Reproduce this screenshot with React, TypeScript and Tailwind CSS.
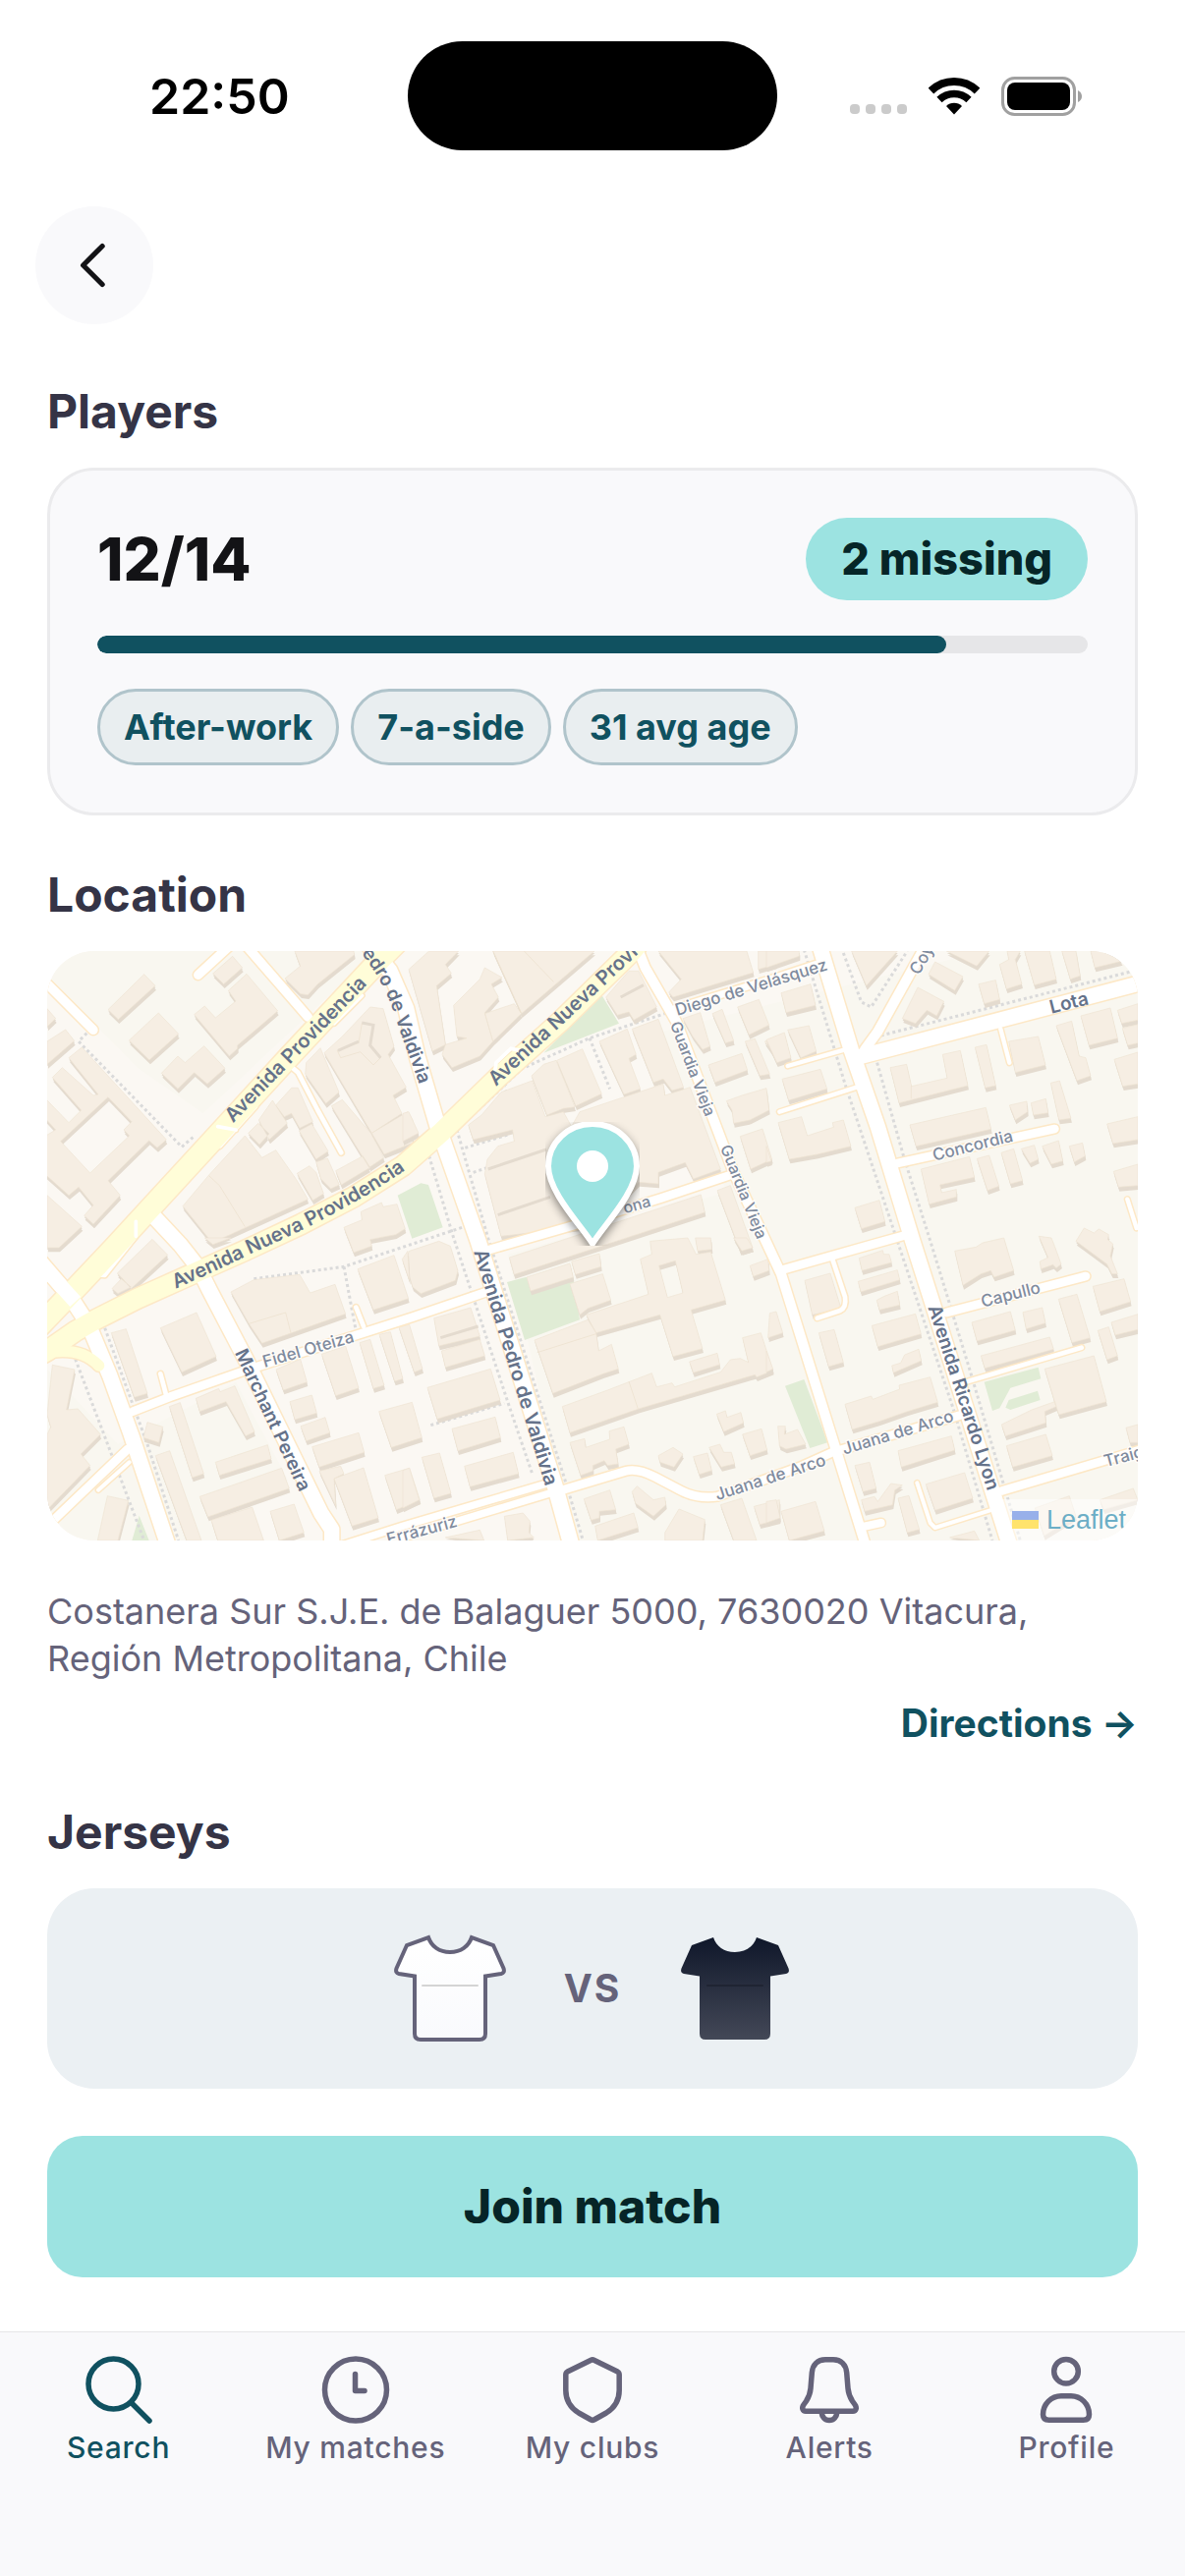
import { useState } from 'react';
import type { ReactNode } from 'react';

const players = { joined: 12, total: 14 };
const tags = ['After-work', '7-a-side', '31 avg age'];

const navItems = [
  { id: 'search', label: 'Search', icon: <SearchIcon /> },
  { id: 'matches', label: 'My matches', icon: <ClockIcon /> },
  { id: 'clubs', label: 'My clubs', icon: <ShieldIcon /> },
  { id: 'alerts', label: 'Alerts', icon: <BellIcon /> },
  { id: 'profile', label: 'Profile', icon: <ProfileIcon /> },
];

// Building footprints, one tile per entry, in tile units.
const tiles = [
  {
    x: 0,
    y: 0,
    d: 'M210,203 320,95 354,130 241,233z M274,297 364,213 425,277 336,357z M473,218 505,192 538,228 600,177 577,145 633,94 728,207 605,312 605,322 580,345z M530,93 590,40 620,75 563,125z M373,397 423,345 445,365 503,314 567,382 513,430 473,395 423,445z M24,200 50,230 24,255z M24,300 80,264 107,298 24,370z M90,350 130,318 388,600 360,625 335,603 210,725 247,770 165,858 137,832 165,800 120,745 90,770 0,690 0,600 50,570 0,515 0,455 90,548 128,510 40,410 70,380 165,465 180,462z M65,605 155,702 275,588 258,570 282,545 210,470z M24,770 130,865 60,930 24,930z M750,108 797,70 780,24 960,24 962,35 850,125 820,158 798,155z M925,285 1010,195 1050,200 1083,315 1065,340 1120,440 1080,465 1107,520 1015,580 870,335z M815,365 858,320 915,455 875,490 812,400z M892,497 925,478 1012,580 1052,655 1007,685z M1015,580 1125,515 1140,540 1140,610 1053,645z M722,495 770,442 790,442 835,545 795,565 770,520 748,530z M670,540 712,480 757,550 702,600z M638,580 668,550 702,582 672,615z M793,573 832,552 882,635 845,660z M518,708 628,588 680,655 722,632 785,722 820,782 528,915 438,803z M787,703 825,680 845,700 868,765 835,785z M845,668 880,657 916,738 890,750 860,720z M905,695 988,650 1010,685 922,738z M930,868 985,845 982,820 1045,792 1050,805 1092,797 1117,872 1088,890 1010,905 1015,925 960,945z',
  },
  {
    x: 1110,
    y: 0,
    d: 'M18,80 80,24 170,24 130,65 148,92 103,130 130,310 90,330z M155,190 235,110 250,75 303,105 270,125 292,165 250,212 275,300 235,345 150,380 120,340 130,310 195,290 165,285z M275,24 585,24 362,215z M250,215 340,185 362,215 275,300z M620,165 650,130 690,85 720,85 740,125 775,195 705,235 690,210 655,220z M780,24 1050,24 1070,90 825,165 812,150 850,110z M1085,24 1140,24 1140,65 1085,80z M700,262 780,232 857,440 822,450 795,415 765,425z M600,300 685,262 712,340 690,352 725,445 675,462z M470,358 548,323 607,460 528,497z M393,405 430,370 468,358 525,500 490,505 440,525z M240,525 300,455 395,420 435,530 490,515 515,560 540,515 675,470 795,430 800,465 877,440 970,690 887,720 862,670 780,700 780,735 720,730 590,860 300,895 250,705 258,660 290,620 340,605 335,570 215,600 200,555z M855,230 908,212 938,315 915,325 885,285z M945,215 975,202 1010,298 985,305z M1022,195 1087,172 1118,250 1057,280z M933,372 1035,337 1052,388 953,425z M1045,300 1075,292 1120,400 1090,405z M1105,300 1140,285 1140,350z M988,482 1035,465 1110,443 1118,510 1060,540 1010,550 1005,510z M1030,590 1098,567 1127,660 1062,690z M325,960 910,768 922,822 340,1012z M960,755 1000,740 1068,930 1030,940z M0,520 18,515 48,580 0,605z M5,970 20,940 110,910 145,925 168,1000 160,1030 55,1070 30,1050z',
  },
  {
    x: 2220,
    y: 0,
    d: 'M0,24 100,24 100,40 0,75z M260,24 400,24 305,130z M550,24 680,24 642,70z M495,95 515,57 600,102 575,145z M462,135 542,178 520,222 490,205 455,245 415,230z M648,125 700,113 712,172 665,185z M712,65 740,50 735,24 775,24 760,50 780,125 733,140z M788,24 865,24 885,110 818,128z M902,24 945,24 958,100 928,110z M990,24 1060,24 1085,55 1003,75z M45,152 135,125 150,190 60,212z M0,295 55,273 75,350 32,365z M65,265 130,252 152,330 105,350z M48,415 165,385 185,445 68,480z M36,548 107,530 125,588 205,562 202,548 235,540 258,620 155,645 70,660z M0,620 15,665 0,670z M378,380 428,370 443,437 552,412 538,340 592,328 615,435 405,488z M637,318 672,310 700,435 668,442z M740,300 830,285 852,372 760,395z M885,252 932,238 955,345 975,350 990,405 948,420z M960,222 1050,198 1072,290 985,312z M1072,205 1134,185 1134,235 1085,245z M1087,260 1134,248 1134,305 1103,312z M1062,355 1134,333 1134,430 1088,437z M868,427 895,420 930,535 893,540z M742,495 795,483 797,515 760,540z M808,488 853,475 860,518 815,525z M438,555 670,502 686,568 457,620z M472,690 620,652 635,715 530,738 535,762 580,752 580,775 497,797z M643,658 680,648 710,742 675,755z M717,640 755,628 782,725 745,735z M778,628 818,617 830,660 805,672z M842,620 892,603 905,665 870,675z M925,620 965,610 973,650 940,668z M1040,552 1134,530 1134,600 1058,612z M1060,697 1134,675 1134,740 1075,745z M270,808 345,785 362,850 290,872z M945,910 970,870 1000,885 1015,873 1045,890 1042,905 1058,918 1050,955 1072,1010 1055,1010 1040,980z',
  },
  {
    x: 0,
    y: 900,
    d: 'M505,0 585,0 530,20z M238,108 345,4 392,52 280,155 255,125z M222,155 250,125 280,150 240,170z M370,275 480,228 540,362 435,410z M220,290 265,278 330,475 290,487z M585,165 655,128 795,112 827,168 903,142 935,232 680,322 640,262z M972,95 1083,53 1127,185 1020,220z M1108,65 1125,40 1130,130z M330,563 377,577 365,625 318,610z M397,515 430,503 502,720 467,732z M478,490 548,460 552,470 597,452 657,592 630,605 570,500 490,530z M538,685 697,632 708,675 550,725z M490,790 740,703 763,765 515,852z M355,665 398,650 495,924 450,924z M525,862 650,822 685,924 545,924z M705,835 778,813 808,900 733,924z M723,402 797,370 817,440 745,465z M765,500 832,480 847,535 780,555z M798,575 873,548 887,595 815,620z M833,638 975,595 992,655 855,700z M855,712 920,697 930,720 900,735 905,818z M900,735 990,702 1035,855 955,880z M862,355 935,330 975,458 905,482z M978,320 1010,310 1053,450 1020,460z M1038,295 1072,287 1110,430 1085,438z M1098,273 1130,265 1170,400 1145,410z M1037,530 1138,502 1168,610 1075,640z M1055,725 1130,703 1162,800 1090,830z M40,388 108,402 83,525 118,522 187,600 127,660 155,695 24,830 24,600 35,578 24,540z M208,788 272,802 240,924 178,924z',
  },
  {
    x: 1110,
    y: 900,
    d: 'M95,245 207,213 235,300 110,330z M118,345 235,310 250,360 130,395z M75,457 268,400 297,495 105,553z M150,583 282,547 298,610 168,650z M188,697 337,655 353,720 205,760z M58,670 112,657 147,780 95,795z M310,850 367,840 388,865 385,900 400,915 320,924z M130,915 235,892 248,924z M378,120 510,78 520,120 390,162z M515,72 600,48 605,88 527,112z M510,140 610,110 635,190 565,215 540,235z M725,65 760,50 755,10 870,0 895,50 940,43 985,190 880,220 915,338 825,362 785,235 590,290 560,235 750,172z M782,85 808,182 855,168 832,70z M402,312 565,250 590,290 598,345 637,325 658,400 612,415 458,475z M487,515 625,465 760,413 775,455 822,443 830,455 970,410 1000,372 1030,368 1055,380 1037,305 1093,290 1130,405 1080,425 1075,418 720,522 510,595z M875,378 960,352 967,387 887,412z M1060,85 1115,65 1118,100 1070,118z M893,0 940,0 943,35 900,40z M1010,0 1050,0 1068,30 1035,40z M958,538 985,528 990,548 1032,533 1040,565 980,592z M1037,600 1095,583 1112,648 1060,665z M935,640 968,630 980,655 1003,655 1013,690 972,700z M887,668 930,657 943,710 905,722z M780,665 825,640 855,660 828,700 785,685z M510,625 555,613 558,640 632,615 630,590 675,577 690,630 650,645 657,690 625,695 615,680 580,695 580,712 543,725z M553,797 632,770 650,830 600,835 600,855 575,862z M587,880 705,840 718,885 595,924z M700,775 715,758 765,800 800,792 803,815 765,850 710,810z M800,900 843,828 922,860 915,924 800,924z M970,815 1035,795 1080,924 1010,924z M1072,820 1150,800 1150,860 1090,875z M0,710 20,703 50,800 0,825z',
  },
  {
    x: 2220,
    y: 900,
    d: 'M575,40 640,28 660,15 725,0 755,100 695,120 685,100 655,110 600,145z M832,-5 870,0 880,25 900,80 885,92 875,82 838,95 835,72 860,60z M997,148 1092,125 1112,195 1018,225z M892,187 948,172 988,305 933,320z M1012,283 1045,272 1072,360 1040,372z M1053,258 1134,233 1134,280 1065,297z M117,130 195,108 228,215 140,235z M160,290 207,280 235,380 190,393z M283,62 355,38 358,50 375,50 382,75 292,100z M280,133 400,98 407,128 288,165z M337,190 360,178 400,163 407,205 345,220z M322,268 455,232 472,293 340,332z M383,390 410,382 422,357 465,340 473,375 388,412z M240,508 320,483 325,493 407,462 405,450 500,425 523,502 430,530 345,560 262,585z M402,650 565,605 575,648 412,700z M487,752 605,717 630,795 515,832z M35,575 58,575 55,600 95,585 120,630 60,645 40,635z M270,695 315,685 335,765 295,775z M290,800 330,790 340,805 380,750 415,755 392,770 385,815 300,835z M402,795 435,787 467,890 430,900z M45,835 150,805 177,895 70,924z M0,805 30,800 42,855 0,870z M627,258 745,225 760,282 643,315z M783,227 842,213 852,260 793,278z M655,360 865,303 877,340 667,398z M850,400 1000,360 1038,500 893,540 880,500z M718,570 810,525 880,500 885,515 850,530 853,565 730,605z M733,635 853,600 873,665 752,700z M1098,580 1134,570 1134,625 1110,625z M820,825 925,788 945,850 848,910z M1018,800 1120,765 1134,800 1030,830z M10,230 30,225 50,290 5,305z M0,345 20,400 0,410z M560,915 635,895 650,924z',
  },
];

const parks =
  'M1094,770 1165,733 1188,738 1232,868 1138,902z M1540,335 1715,155 1770,245z M1428,1035 1485,1020 1630,1020 1650,1150 1482,1212z M2277,1352 2335,1332 2407,1525 2353,1542z M2885,1340 3050,1295 3058,1330 2965,1358 2932,1420 2910,1428z M2960,1395 3048,1367 3056,1395 2965,1425 2950,1418z M283,1824 305,1748 335,1824z';

const footpaths =
  'M145,275 120,300 435,622 470,592 M655,1025 930,988 1300,865 M930,988 965,1175 M200,1175 330,1530 425,1824 M110,1270 220,1560 320,1824 M1190,650 1265,900 1430,1400 1505,1620 M1275,570 1370,900 1610,1655 1660,1824 M1275,570 1430,425 1815,50 M1470,385 1680,290 1910,215 M1680,290 1742,445 M1300,625 1430,585 1448,510 1420,440 M1325,700 1550,625 M2335,20 2460,430 2610,880 2790,1420 2910,1824 M2558,365 2640,655 2725,924 2840,1300 2995,1824 M2455,30 2510,180 2540,195 2650,24 M2570,282 3340,85 M1195,1472 1420,1405';

// Drawn in order: every casing first, then every fill, so junctions stay open.
const roads = [
  { d: 'M760,370 790,395 850,510 922,640', w: 14 },
  { d: 'M675,470 660,500 552,620 M545,560 600,570', w: 12 },
  { d: 'M985,160 900,245 870,235', w: 12 },
  { d: 'M295,850 295,895 200,1015 155,1010', w: 12 },
  { d: 'M390,1390 370,1315 M990,1170 967,1112', w: 14 },
  { d: 'M275,1585 180,1670', w: 12 },
  { d: 'M2460,325 2285,375 M2495,440 2260,515 M2935,262 2962,365 M3322,782 3350,870', w: 13 },
  { d: 'M2420,960 2460,1080 Q2465,1112 2445,1122 L2375,1145', w: 14 },
  { d: 'M2835,1338 3182,1235', w: 14 },
  { d: 'M2910,1730 2735,1785 2720,1770 2680,1648', w: 12 },
  { d: 'M2515,1782 2570,1770', w: 24 },
  { d: 'M20,120 165,265', w: 28 },
  { d: 'M590,0 485,97', w: 28 },
  { d: 'M625,0 820,225', w: 28 },
  { d: 'M270,1545 40,1765', w: 26 },
  { d: 'M285,1430 400,1385 620,1308 1140,1142 1380,1060', w: 26 },
  { d: 'M1360,940 1610,868 1900,778 2110,708', w: 26 },
  { d: 'M1550,1650 1110,1780 920,1840 M1575,1675 1110,1815', w: 22 },
  { d: 'M1590,1672 1790,1612 Q1825,1602 1880,1630 L1960,1672 Q2010,1698 2070,1690 L2320,1600 2420,1555 2810,1442', w: 26 },
  { d: 'M1820,0 1850,75 1945,240 2120,700 2265,1010 2430,1540 2520,1830', w: 30 },
  { d: 'M1940,200 2250,105 2370,65', w: 22 },
  { d: 'M2640,893 2550,918 2260,1000', w: 26 },
  { d: 'M2520,325 2560,270 2710,0', w: 30 },
  { d: 'M2620,672 3100,567', w: 26 },
  { d: 'M2770,1128 3195,1017', w: 26 },
  { d: 'M2940,1672 3360,1548', w: 26 },
  { d: 'M2500,348 3400,112', w: 46 },
  { d: 'M350,835 430,920 485,990 520,1060 630,1270 860,1740 893,1790 893,1830', w: 46 },
  { d: 'M0,970 95,1080 150,1165 215,1320 280,1500 390,1830', w: 46 },
  { d: 'M985,-20 1070,85 1120,200 1155,350 1215,555 1340,910 1575,1660 1622,1830', w: 48 },
  { d: 'M2380,0 2480,330 2560,560 2665,905 2960,1830', w: 46 },
];

const avenues = [
  { d: 'M1090,0 1040,50 760,350 568,560 228,930 110,1055 0,1170', w: 64 },
  { d: 'M-10,1265 24,1245 110,1185 175,1148 300,1085 450,1018 625,940 800,858 960,775 1110,680 1230,575 1400,410 1590,240 1810,24 1835,-5', w: 60 },
  { d: 'M0,1256 Q120,1225 182,1290', w: 34 },
];

const streetLabels = [
  { text: 'Avenida Providencia', x: 592, y: 550, angle: -46, size: 60, major: true },
  { text: 'Avenida Nueva Providencia', x: 1394, y: 438, angle: -43, size: 60, major: true },
  { text: 'Avenida Pedro de Valdivia', x: 1326, y: 942, angle: 73, size: 60, major: true },
  { text: 'Avenida Ricardo Lyon', x: 2713, y: 1112, angle: 72, size: 57, major: true },
  { text: 'Marchant Pereira', x: 596, y: 1250, angle: 65, size: 57, major: true },
  { text: 'Lota', x: 3090, y: 215, angle: -14, size: 57, major: true },
  { text: 'Guardia Vieja', x: 1925, y: 247, angle: 69, size: 48 },
  { text: 'Guardia Vieja', x: 2078, y: 624, angle: 68, size: 48 },
  { text: 'Diego de Velásquez', x: 1948, y: 222, angle: -17, size: 51 },
  { text: 'ona', x: 1788, y: 826, angle: -16, size: 48 },
  { text: 'Coyancura', x: 2685, y: 100, angle: -60, size: 51 },
  { text: 'Concordia', x: 2732, y: 665, angle: -14, size: 51 },
  { text: 'Fidel Oteiza', x: 688, y: 1296, angle: -16, size: 51 },
  { text: 'Errázuriz', x: 1066, y: 1838, angle: -15, size: 51 },
  { text: 'Juana de Arco', x: 2070, y: 1702, angle: -18, size: 51 },
  { text: 'Juana de Arco', x: 2458, y: 1562, angle: -17, size: 51 },
  { text: 'Capullo', x: 2880, y: 1112, angle: -14, size: 51 },
  { text: 'Traiguén', x: 3256, y: 1600, angle: -15, size: 51 },
];

function StreetMap() {
  return (
    <svg
      className="h-full w-full"
      viewBox="0 0 1110 600"
      preserveAspectRatio="xMidYMid slice"
      fontFamily='Inter, "Liberation Sans", sans-serif'
      role="img"
      aria-label="Map of the match location"
    >
      <rect width="1110" height="600" fill="#fbf8f3" />
      <g transform="translate(-8 -8) scale(0.33333)">
        <path d="M24,24H1030L500,520 300,380 24,100z M1430,950 2100,760 1900,270 2900,20H3400V1900H1650z M240,1530 600,1340 760,1640 500,1700 600,1900H24V1300z" fill="#f9f7f0" />
        <path d={parks} fill="#e0ecd5" />
        <path d={footpaths} fill="none" stroke="#dadada" strokeWidth="9" strokeDasharray="9 9" />
        {tiles.map((tile) => (
          <g key={`${tile.x}-${tile.y}`} transform={`translate(${tile.x} ${tile.y})`} fillRule="evenodd">
            <path d={tile.d} fill="#e4dbcf" transform="translate(3 13)" />
            <path d={tile.d} fill="#e4dbcf" transform="translate(1 6)" />
            <path d={tile.d} fill="#f6eee3" stroke="#efe4d3" strokeWidth="2" />
          </g>
        ))}
        <g fill="#f6eee3" stroke="#ecdfcb" strokeWidth="2">
          <path d="M910,328 975,305 985,245 1020,250 1010,315 1042,350 1020,372 980,332 920,350z" />
          <path d="M518,710 550,740 628,866 M1385,24 1472,215 M1480,24 1570,118 M2662,437 2662,475 M640,1162 752,1128 768,1190 M1520,1250 1700,1193 M1800,1338 1828,1422" fill="none" />
        </g>
        <path d="M912,328 975,300 M985,243 1020,250 1010,312 1042,350 M1775,165 1845,128 M1370,690 1548,630 M1400,830 1560,775 M1225,1205 1340,1170" fill="none" stroke="#e4dbcf" strokeWidth="9" />
        <g fill="none" stroke="#fde8c6" strokeLinecap="round" strokeLinejoin="round">
          {[...roads, ...avenues].map((road) => (
            <path key={road.d} d={road.d} strokeWidth={road.w + 9} />
          ))}
        </g>
        <g fill="none" stroke="#ffffff" strokeLinecap="round" strokeLinejoin="round">
          {roads.map((road) => (
            <path key={road.d} d={road.d} strokeWidth={road.w} />
          ))}
        </g>
        <g fill="none" stroke="#fffdd8" strokeLinecap="round" strokeLinejoin="round">
          {avenues.map((road) => (
            <path key={road.d} d={road.d} strokeWidth={road.w} />
          ))}
        </g>
        <path d="M295,850 295,895 M545,560 600,570 M1392,385 1395,365 1440,322 1470,328" fill="none" stroke="#ffffff" strokeWidth="11" strokeLinecap="round" />
        <path d="M40,1018 110,1095" fill="none" stroke="#ffffff" strokeWidth="44" />
        {streetLabels.map((label) => (
          <text
            key={`${label.text}-${label.x}`}
            transform={`translate(${label.x} ${label.y}) rotate(${label.angle})`}
            fontSize={label.size}
            fontWeight={label.major ? 600 : 500}
            fill={label.major ? '#65728a' : '#7f8b9e'}
            stroke={label.major ? 'none' : '#fffdfa'}
            strokeWidth="8"
            paintOrder="stroke"
          >
            {label.text}
          </text>
        ))}
        <path id="nueva-providencia" d="M416,1055 Q560,992 660,942 Q830,867 960,792 Q1060,737 1220,620" fill="none" />
        <path id="pedro-de-valdivia" d="M850,-110 C990,20 1050,110 1085,220 S1130,340 1160,432" fill="none" />
        <g fontSize="60" fontWeight="600" fill="#65728a">
          <text>
            <textPath href="#nueva-providencia">Avenida Nueva Providencia</textPath>
          </text>
          <text textAnchor="end" fontSize="57">
            <textPath href="#pedro-de-valdivia" startOffset="100%">
              Pedro de Valdivia
            </textPath>
          </text>
        </g>
      </g>
    </svg>
  );
}

function MapPin() {
  return (
    <svg className="h-[126px] w-24" viewBox="0 0 96 126" aria-hidden="true">
      <path
        className="drop-shadow-[0_4px_5px_rgba(0,0,0,0.45)]"
        d="M48 124C38 107 3 72 3 45a45 43 0 0 1 90 0C93 72 58 107 48 124z"
        fill="#9ce3e1"
        stroke="#ffffff"
        strokeWidth="6"
      />
      <circle cx="48" cy="45" r="16" fill="#ffffff" />
    </svg>
  );
}

function Jersey({ id, from, to, outline, seam }: { id: string; from: string; to: string; outline?: string; seam: string }) {
  return (
    <svg className="size-[120px]" viewBox="0 0 120 120" role="img" aria-label={`${id} jersey`}>
      <defs>
        <linearGradient id={id} x1="0" y1="0" x2="0" y2="1">
          <stop offset="0" stopColor={from} />
          <stop offset="1" stopColor={to} />
        </linearGradient>
      </defs>
      <path
        d="M38 8C41 17 49 23 60 23S79 17 82 8L104 16L114.5 39.500Q116 44 112 45L96 47.500V106Q96 112 90 112H30Q24 112 24 106V47.500L8 45Q4 44 5.500 39.500L16 16Z"
        fill={`url(#${id})`}
        stroke={outline}
        strokeWidth="4"
      />
      <path d="M32 57H88" stroke={seam} strokeWidth="2" strokeLinecap="round" />
    </svg>
  );
}

function NavIcon({ children }: { children: ReactNode }) {
  return (
    <svg
      className="size-[72px]"
      viewBox="0 0 72 72"
      fill="none"
      stroke="currentColor"
      strokeWidth="5.500"
      strokeLinecap="round"
      strokeLinejoin="round"
      aria-hidden="true"
    >
      {children}
    </svg>
  );
}

function SearchIcon() {
  return (
    <NavIcon>
      <circle cx="30.500" cy="29.500" r="25.500" />
      <path d="M49 49L67 67" />
    </NavIcon>
  );
}

function ClockIcon() {
  return (
    <NavIcon>
      <circle cx="36" cy="35.500" r="31.500" />
      <path d="M35.500 19.500V36.500H45" />
    </NavIcon>
  );
}

function ShieldIcon() {
  return (
    <NavIcon>
      <path d="M34.500 5.200Q36 4.200 37.500 5.200L61.500 17Q63.200 18 63.200 20V36C63.200 46 58 54 50 59L37.500 66Q36 67 34.500 66L22 59C14 54 8.800 46 8.800 36V20Q8.800 18 10.500 17Z" />
    </NavIcon>
  );
}

function BellIcon() {
  return (
    <NavIcon>
      <path d="M32 4.700H40C48 4.700 53 10 53.700 18L55 34C55.400 39 57 43 59.500 47L62 50.500C64.500 54 63 57.300 60 57.300H12C9 57.300 7.500 54 10 50.500L12.500 47C15 43 16.600 39 17 34L18.300 18C19 10 24 4.700 32 4.700Z" />
      <path d="M28 58C28.500 63 31.500 66.500 36 66.500S43.500 63 44 58" />
    </NavIcon>
  );
}

function ProfileIcon() {
  return (
    <NavIcon>
      <circle cx="36" cy="16.700" r="12.300" />
      <path d="M31 41.700H41C51 41.700 59.500 50 59.500 60.500Q59.500 66.300 53.500 66.300H18.500Q12.500 66.300 12.500 60.500C12.500 50 21 41.700 31 41.700Z" />
    </NavIcon>
  );
}

function StatusBar() {
  return (
    <header className="grid h-[111px] grid-cols-3 items-center">
      <div className="pl-[152px] text-[50px] leading-[60px] font-semibold text-black">22:50</div>
      <div className="mx-auto h-[111px] w-[376px] rounded-full bg-black" />
      <div className="flex items-center justify-end gap-[22px] pr-[103px]">
        <div className="flex gap-[6px] pt-[26px]">
          {[0, 1, 2, 3].map((dot) => (
            <span key={dot} className="size-[10px] rounded-[4px] bg-[#cbcbcb]" />
          ))}
        </div>
        <svg className="h-[38px] w-[52px]" viewBox="0 0 52 38" fill="none" stroke="#000000" aria-hidden="true">
          <path d="M2.500 13.500A34 34 0 0 1 49.500 13.500" strokeWidth="8" />
          <path d="M11 22.500A21.500 21.500 0 0 1 41 22.500" strokeWidth="7.500" />
          <path d="M26 37.500L18 29A11.500 11.500 0 0 1 34 29Z" fill="#000000" stroke="none" />
        </svg>
        <svg className="h-10 w-[84px]" viewBox="0 0 84 40" aria-hidden="true">
          <rect x="1.500" y="1.500" width="73" height="37" rx="12" fill="none" stroke="#a0a0a0" strokeWidth="3" />
          <rect x="6" y="6" width="64" height="28" rx="8" />
          <path d="M78 14Q82 16 82 20T78 26Z" fill="#a0a0a0" />
        </svg>
      </div>
    </header>
  );
}

function SectionTitle({ children }: { children: ReactNode }) {
  return <h2 className="mb-6 text-[48px] leading-[66px] font-bold text-[#353446]">{children}</h2>;
}

export default function App() {
  const [tab, setTab] = useState('search');
  const progress = (players.joined / players.total) * 100;

  return (
    <div className="flex min-h-screen flex-col bg-white pt-[42px] font-[Inter,'Liberation_Sans',sans-serif]">
      <StatusBar />

      <div className="px-9 pt-[57px]">
        <button className="grid size-[120px] place-items-center rounded-full bg-[#f9f9fb] text-[#131316]" type="button" aria-label="Back">
          <svg className="size-[78px]" viewBox="0 0 24 24" fill="none" stroke="currentColor" strokeWidth="1.600" strokeLinecap="round" strokeLinejoin="round">
            <path d="M14.500 6l-6 6 6 6" />
          </svg>
        </button>
      </div>

      <main className="flex flex-col gap-12 px-12 pt-14 pb-[54px]">
        <section>
          <SectionTitle>Players</SectionTitle>
          <div className="flex flex-col gap-9 rounded-[48px] border-3 border-[#ebebed] bg-[#f9f9fb] p-12">
            <div className="flex items-center justify-between">
              <span className="text-[60px] leading-[72px] font-extrabold text-[#131316]">
                {players.joined}/{players.total}
              </span>
              <span className="rounded-full bg-[#9ce3e1] px-9 py-3 text-[45px] leading-[60px] font-extrabold text-[#062527]">
                {players.total - players.joined} missing
              </span>
            </div>
            <div
              className="h-[18px] overflow-hidden rounded-full bg-[#e6e6e8]"
              role="progressbar"
              aria-label="Players joined"
              aria-valuemin={0}
              aria-valuemax={players.total}
              aria-valuenow={players.joined}
            >
              <div className="h-full rounded-full bg-[#105160]" style={{ width: `${progress}%` }} />
            </div>
            <ul className="flex gap-3">
              {tags.map((tag) => (
                <li key={tag} className="rounded-full border-3 border-[#b0c4cb] bg-[#e9eef0] px-6 py-3 text-[36px] leading-[48px] font-bold text-[#105160]">
                  {tag}
                </li>
              ))}
            </ul>
          </div>
        </section>

        <section>
          <SectionTitle>Location</SectionTitle>
          <div className="relative h-[600px] overflow-hidden rounded-[48px]">
            <StreetMap />
            <div className="absolute bottom-1/2 left-1/2 -translate-x-1/2">
              <MapPin />
            </div>
            <a className="absolute right-0 bottom-0 flex items-center gap-2 bg-white/50 px-3 font-['Liberation_Sans',sans-serif] text-[27px] leading-[42px] text-[#6caec6]" href="#leaflet">
              <svg className="h-[18px] w-[27px]" viewBox="0 0 27 18" aria-hidden="true">
                <path d="M0 0H27V9H0z" fill="#98b0ea" />
                <path d="M0 9H27V18H0z" fill="#ffe36c" />
              </svg>
              Leaflet
            </a>
          </div>
          <p className="mt-12 text-[36px] leading-[48px] text-[#65637a]">
            Costanera Sur S.J.E. de Balaguer 5000, 7630020 Vitacura, Región Metropolitana, Chile
          </p>
          <div className="mt-3 flex justify-end">
            <a className="text-[39px] leading-[60px] font-bold text-[#105160]" href="#directions">
              Directions →
            </a>
          </div>
        </section>

        <section>
          <SectionTitle>Jerseys</SectionTitle>
          <div className="flex items-center justify-center gap-14 rounded-[48px] bg-[#ebf0f3] py-[42px]">
            <Jersey id="home" from="#ffffff" to="#f9fafd" outline="#65637a" seam="#d4d4d4" />
            <span className="text-[39px] leading-[48px] font-bold tracking-wider text-[#65637a]">VS</span>
            <Jersey id="away" from="#0f172a" to="#434857" seam="#1f2433" />
          </div>
        </section>

        <button className="rounded-[36px] bg-[#9ce3e1] py-10 text-[48px] leading-[64px] font-extrabold text-[#062527]" type="button">
          Join match
        </button>
      </main>

      <nav className="mt-auto grid grid-cols-5 border-t border-[#e6e6e8] bg-[#f9f9fb] pt-[23px] pb-[109px]">
        {navItems.map((item) => (
          <button
            className={`flex flex-col items-center text-[30px] leading-[44px] font-medium tracking-wide ${tab === item.id ? 'text-[#105160]' : 'text-[#65637a]'}`}
            key={item.id}
            onClick={() => setTab(item.id)}
            type="button"
          >
            {item.icon}
            {item.label}
          </button>
        ))}
      </nav>
    </div>
  );
}
